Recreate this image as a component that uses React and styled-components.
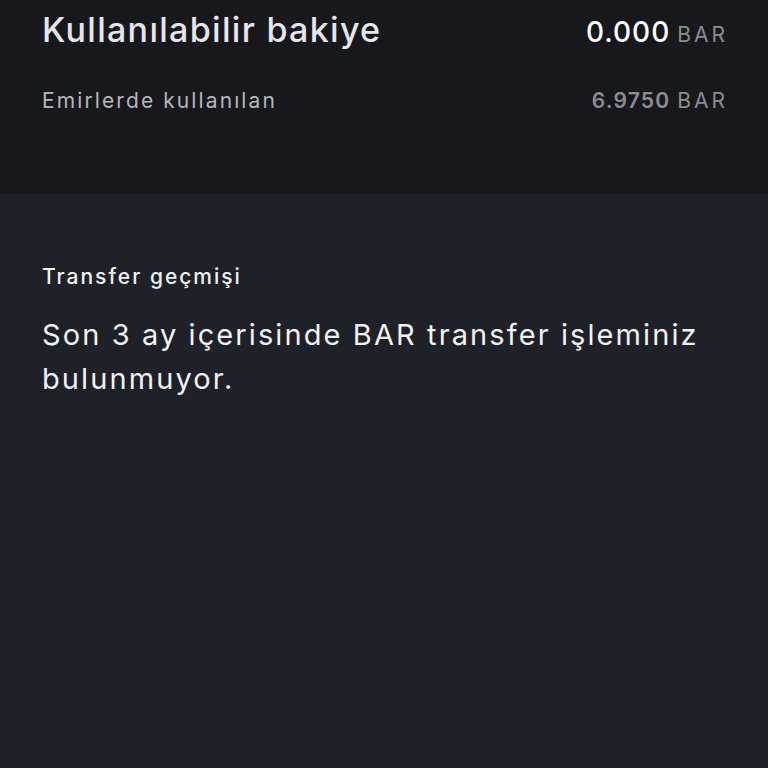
import React from 'react';
import styled, { createGlobalStyle } from 'styled-components';

const Global = createGlobalStyle`
  html, body {
    margin: 0;
    padding: 0;
    background: #1f2128;
  }
  body {
    font-family: Inter, "Noto Sans", sans-serif;
    -webkit-font-smoothing: antialiased;
  }
`;

const Page = styled.div`
  width: 768px;
  height: 768px;
  display: flex;
  flex-direction: column;
  background: #1f2128;
  overflow: hidden;
`;

const BalancePanel = styled.div`
  height: 194px;
  box-sizing: border-box;
  background: #17181c;
  padding: 10px 43px 0 42px;
  display: flex;
  flex-direction: column;
  gap: 35px;
`;

const Row = styled.div`
  display: flex;
  justify-content: space-between;
  align-items: baseline;
`;

const Label = styled.span`
  font-size: ${p => (p.big ? '34px' : '21px')};
  line-height: ${p => (p.big ? '40px' : '28px')};
  font-weight: ${p => (p.big ? 500 : 400)};
  letter-spacing: ${p => (p.big ? '1.3px' : '2.1px')};
  color: ${p => (p.big ? '#e6e6ea' : '#b6b6bc')};
`;

const Value = styled.span`
  display: flex;
  align-items: baseline;
  gap: 7px;
`;

const Amount = styled.span`
  font-size: ${p => (p.big ? '28px' : '21px')};
  line-height: ${p => (p.big ? '40px' : '28px')};
  font-weight: ${p => (p.big ? 500 : 600)};
  letter-spacing: ${p => (p.big ? '1px' : '1.2px')};
  color: ${p => (p.big ? '#ffffff' : '#8c8c92')};
`;

const Unit = styled.span`
  font-size: 21px;
  line-height: 28px;
  font-weight: 400;
  letter-spacing: 3px;
  margin-right: -3px;
  color: #8c8c92;
`;

const History = styled.div`
  padding: 69px 43px 0 42px;
  display: flex;
  flex-direction: column;
  gap: 22px;
`;

const HistoryTitle = styled.div`
  font-size: 21px;
  line-height: 28px;
  font-weight: 500;
  letter-spacing: 2px;
  color: #f2f2f4;
`;

const Empty = styled.div`
  font-size: 29px;
  line-height: 44px;
  font-weight: 400;
  letter-spacing: 2.1px;
  color: #f2f2f4;
`;

export default function App() {
  return (
    <Page>
      <Global />
      <BalancePanel>
        <Row>
          <Label big>Kullanılabilir bakiye</Label>
          <Value>
            <Amount big>0.000</Amount>
            <Unit>BAR</Unit>
          </Value>
        </Row>
        <Row>
          <Label>Emirlerde kullanılan</Label>
          <Value>
            <Amount>6.9750</Amount>
            <Unit>BAR</Unit>
          </Value>
        </Row>
      </BalancePanel>
      <History>
        <HistoryTitle>Transfer geçmişi</HistoryTitle>
        <Empty>Son 3 ay içerisinde BAR transfer işleminiz bulunmuyor.</Empty>
      </History>
    </Page>
  );
}
